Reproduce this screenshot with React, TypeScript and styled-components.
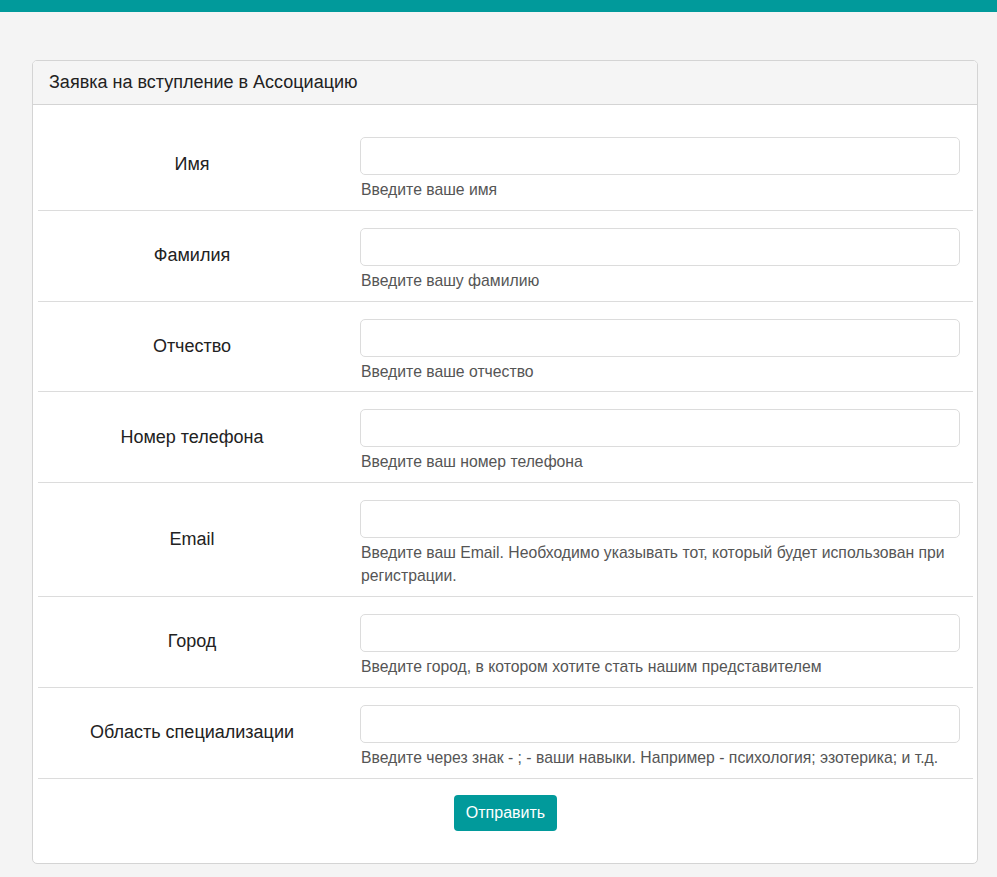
import React from "react";
import styled, { createGlobalStyle } from "styled-components";

const Global = createGlobalStyle`
  html, body { margin: 0; padding: 0; background: #f4f4f4; }
  body { font-family: "Liberation Sans", Arial, sans-serif; color: #333; }
  * { box-sizing: border-box; }
`;

const TopBar = styled.div`
  height: 12px;
  background: #019a9b;
`;

const Container = styled.div`
  padding: 48px 19px 14px 32px;
`;

const Card = styled.div`
  background: #fff;
  border: 1px solid #d4d4d4;
  border-radius: 5px;
  overflow: hidden;
`;

const CardHeader = styled.div`
  background: #f5f5f5;
  border-bottom: 1px solid #d4d4d4;
  height: 44px;
  padding: 0 16px;
  display: flex;
  align-items: center;
  font-size: 18px;
  color: #222;
`;

const CardBody = styled.div`
  padding: 15px 4px 32px 5px;
`;

const Row = styled.div`
  display: grid;
  grid-template-columns: 308px 600px;
  column-gap: 14px;
  align-items: center;
  padding: 17px 0 8.5px;
  border-bottom: 1px solid #dcdcdc;
`;

const Label = styled.label`
  text-align: center;
  font-size: 18px;
  color: #222;
  padding-bottom: 9px;
`;

const Field = styled.div`
  display: flex;
  flex-direction: column;
`;

const Input = styled.input`
  height: 38px;
  border: 1px solid #dcdcdc;
  border-radius: 5px;
  background: #fff;
  padding: 6px 12px;
  font-size: 16px;
  font-family: inherit;
  outline: none;
`;

const Help = styled.div`
  margin-top: 3px;
  font-size: 15.75px;
  line-height: 23.3px;
  color: #555;
  padding-left: 1px;
`;

const Actions = styled.div`
  display: flex;
  justify-content: center;
  padding-top: 16px;
`;

const Button = styled.button`
  height: 36px;
  padding: 0 12px;
  background: #019a9b;
  color: #fff;
  border: none;
  border-radius: 4px;
  font-size: 16px;
  font-family: inherit;
  cursor: pointer;
`;

const fields: [string, string][] = [
  ["Имя", "Введите ваше имя"],
  ["Фамилия", "Введите вашу фамилию"],
  ["Отчество", "Введите ваше отчество"],
  ["Номер телефона", "Введите ваш номер телефона"],
  ["Email", "Введите ваш Email. Необходимо указывать тот, который будет использован при регистрации."],
  ["Город", "Введите город, в котором хотите стать нашим представителем"],
  ["Область специализации", "Введите через знак - ; - ваши навыки. Например - психология; эзотерика; и т.д."],
];

export default function App() {
  return (
    <>
      <Global />
      <TopBar />
      <Container>
        <Card>
          <CardHeader>Заявка на вступление в Ассоциацию</CardHeader>
          <CardBody>
            {fields.map(([label, help]) => (
              <Row key={label}>
                <Label>{label}</Label>
                <Field>
                  <Input type="text" />
                  <Help>{help}</Help>
                </Field>
              </Row>
            ))}
            <Actions>
              <Button>Отправить</Button>
            </Actions>
          </CardBody>
        </Card>
      </Container>
    </>
  );
}
